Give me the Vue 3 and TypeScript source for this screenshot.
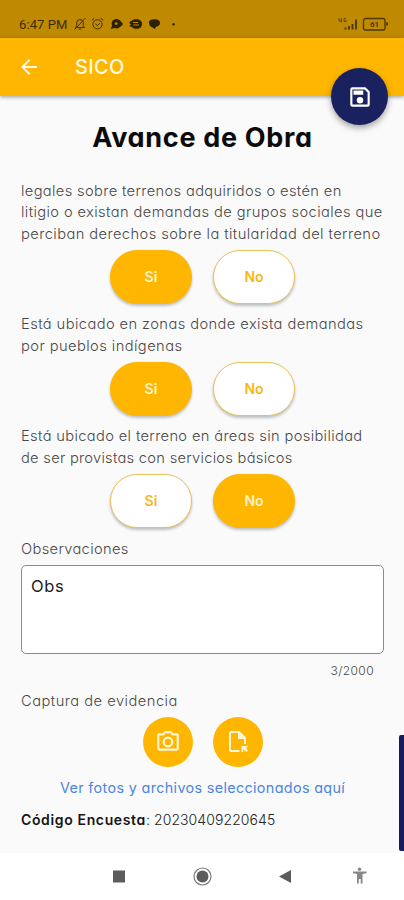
<script setup lang="ts">
import { ref } from 'vue'

type Answer = 'Si' | 'No'
interface Line { text: string; spacing: number }
interface Question { id: number; lines: Line[]; answer: Answer }

const options: Answer[] = ['Si', 'No']
const questions = ref<Question[]>([
  {
    id: 1,
    lines: [
      { text: 'legales sobre terrenos adquiridos o estén en', spacing: 0.35 },
      { text: 'litigio o existan demandas de grupos sociales que', spacing: 0.39 },
      { text: 'perciban derechos sobre la titularidad del terreno', spacing: 0.42 },
    ],
    answer: 'Si',
  },
  {
    id: 2,
    lines: [
      { text: 'Está ubicado en zonas donde exista demandas', spacing: 0.41 },
      { text: 'por pueblos indígenas', spacing: 0.43 },
    ],
    answer: 'Si',
  },
  {
    id: 3,
    lines: [
      { text: 'Está ubicado el terreno en áreas sin posibilidad', spacing: 0.35 },
      { text: 'de ser provistas con servicios básicos', spacing: 0.27 },
    ],
    answer: 'No',
  },
])
const notes = ref('Obs')
</script>

<template>
  <div class="screen">
    <div class="status">
      <span class="time">6:47 PM</span>
      <svg class="notices" width="104" height="16" viewBox="0 0 104 16" fill="none" stroke="#3d2d08" stroke-width="1">
        <path d="M2.500 11.500h9l-1.300-2V6.300a3.300 3.300 0 0 0-6.500 0v3.200zM5.800 13.200h2.400M1.500 13.500 12.500 2" />
        <circle cx="24.500" cy="8.300" r="4.600" />
        <path d="m18.800 4.200 2.500-2M30.200 4.200l-2.500-2M22.500 8l1.800 1.600 2.700-2.500" />
        <g fill="#2b2108" stroke="none">
          <path d="M43.500 3a4.700 4.700 0 1 1-1.500 9.100L37.500 13l1.600-3.200A4.700 4.700 0 0 1 43.500 3zM47 5l2.500 2v2L47 11z" />
          <circle cx="43.200" cy="7.600" r="1.400" fill="#bf8a00" />
          <path d="M56 6.500c2-1 3-2.800 6-3.200 4-.5 7 1.500 7 4.500s-2 5-5.500 5c-2.300 0-3.500-.6-4.500-1.800L56 10l2-1.300z" />
          <path d="M60 6.500h5M60.500 9h5.500" stroke="#bf8a00" />
          <path d="M76 6.500C76 4.300 78 3.300 81.500 3.300s5.500 1.200 5.500 3.500-1.500 3.700-4 3.900L82 13l-2.500-1.500C77 10.500 76 9 76 6.500z" />
          <circle cx="100.500" cy="8.300" r="1.200" />
        </g>
      </svg>
      <span class="grow"></span>
      <svg width="54" height="16" viewBox="0 0 54 16" fill="none" stroke="#4d380a">
        <path d="M3 2v3h3M5.500 2v4.500M10 2.500H8v3h2V4" stroke-width=".8" />
        <path d="M9.500 13.500v-2M13 13.500V10M16.500 13.500V8M20 13.500V3.500" stroke-width="1.900" />
        <rect x="27.500" y="2.500" width="21.500" height="11.500" rx="2" stroke-width="1.300" />
        <path d="M51 6.500v3" stroke-width="1.800" />
        <text x="38.500" y="11" text-anchor="middle" class="battery">61</text>
      </svg>
    </div>

    <header class="bar">
      <svg width="24" height="24" viewBox="0 0 24 24" fill="#fff8e2"><path d="M20 11H7.830l5.590-5.590L12 4l-8 8 8 8 1.410-1.410L7.830 13H20v-2z" /></svg>
      <span class="app-name">SICO</span>
      <button class="save" aria-label="Guardar">
        <svg width="26" height="26" viewBox="0 0 24 24" fill="#fff"><path d="M17 3H5a2 2 0 0 0-2 2v14a2 2 0 0 0 2 2h14a2 2 0 0 0 2-2V7l-4-4zm2 16H5V5h11.170L19 7.830V19zm-7-7a3 3 0 1 0 0 6 3 3 0 0 0 0-6zM6 6h9v4H6V6z" /></svg>
      </button>
    </header>

    <main class="content">
      <h1>Avance de Obra</h1>

      <section v-for="q in questions" :key="q.id" class="question">
        <p v-for="line in q.lines" :key="line.text" class="line"><span :style="{ letterSpacing: line.spacing + 'px' }">{{ line.text }}</span></p>
        <div class="choices">
          <button v-for="o in options" :key="o" class="choice" :class="{ chosen: q.answer === o }" @click="q.answer = o">{{ o }}</button>
        </div>
      </section>

      <p class="line label-notes">Observaciones</p>
      <textarea v-model="notes" class="notes" maxlength="2000"></textarea>
      <p class="counter">{{ notes.length }}/2000</p>

      <p class="line label-evidence">Captura de evidencia</p>
      <div class="captures">
        <button class="round" aria-label="Tomar foto">
          <svg width="26" height="26" viewBox="0 0 24 24" fill="#fff6d8"><path d="M20 4h-3.170L15 2H9L7.170 4H4a2 2 0 0 0-2 2v12a2 2 0 0 0 2 2h16a2 2 0 0 0 2-2V6a2 2 0 0 0-2-2zm0 14H4V6h4.050l1.830-2h4.240l1.830 2H20v12zM12 7a5 5 0 1 0 0 10 5 5 0 0 0 0-10zm0 8a3 3 0 1 1 0-6 3 3 0 0 1 0 6z" /></svg>
        </button>
        <button class="round" aria-label="Elegir archivo">
          <svg width="26" height="26" viewBox="0 0 26 26" fill="none" stroke="#fff6d8" stroke-width="2">
            <path d="M14.500 22H6.500A1.500 1.500 0 0 1 5 20.500v-16A1.500 1.500 0 0 1 6.500 3H14l6 6v6" />
            <path d="M13 3v7h7z" fill="#fff6d8" stroke="none" />
            <path d="M16.500 17h6v1.600h-2l2.500 3-1.500 1.500-3.200-2.800V23h-1.800z" fill="#fff6d8" stroke="none" />
          </svg>
        </button>
      </div>
      <a class="link">Ver fotos y archivos seleccionados aquí</a>
      <p class="code"><b>Código Encuesta</b><span>: 20230409220645</span></p>
      <div class="scrollbar"></div>
    </main>

    <nav class="nav">
      <svg width="404" height="47" viewBox="0 0 404 47" fill="#5c5c5c">
        <rect x="113" y="17.500" width="12" height="12" />
        <circle cx="202.500" cy="23.500" r="6" />
        <circle cx="202.500" cy="23.500" r="8.500" fill="none" stroke="#777" stroke-width="1.200" />
        <path d="M291 17v13l-12-6.500z" />
        <g fill="#888">
          <circle cx="359.500" cy="16.300" r="1.700" />
          <path d="M353 18.500h13.500v1.800l-4 .7v9.500h-1.800V26h-1.900v4.500H357V21l-4-.7z" />
        </g>
      </svg>
    </nav>
  </div>
</template>

<style>
body { background: #fafafa; }
</style>

<style scoped>
* { box-sizing: border-box; }
.screen {
  width: 404px; height: 900px; display: flex; flex-direction: column; overflow: hidden;
  background: #fafafa; color: #484848;
  font-family: Inter, "Open Sans", sans-serif; font-feature-settings: "cv11", "ss03";
}
button { font: inherit; font-feature-settings: inherit; padding: 0; border: 0; cursor: pointer; }
p, h1 { margin: 0; white-space: nowrap; }
.status { height: 38px; flex: none; background: #bf8a00; display: flex; align-items: flex-start; padding: 16px 14px 0 19px; }
.time { font: 400 13px/17px Roboto, sans-serif; color: #3d2c08; letter-spacing: .1px; width: 54px; white-space: nowrap; }
.grow { flex: 1; }
.battery { font: 700 8px Roboto, sans-serif; fill: #4d380a; stroke: none; }
.bar {
  height: 58px; flex: none; background: #ffb600; display: flex; align-items: center; padding-left: 17px;
  position: relative; z-index: 1; box-shadow: 0 1px 4px rgba(0, 0, 0, .38);
}
.app-name { margin-left: 34px; font-size: 20px; font-weight: 500; letter-spacing: .3px; color: #fff8e2; }
.save {
  position: absolute; right: 16px; top: 30px; width: 57px; height: 57px; border-radius: 50%;
  background: #19215f; display: grid; place-items: center; box-shadow: 0 3px 6px rgba(0, 0, 0, .35);
}
.content { flex: 1; position: relative; padding: 22px 20px 0 21px; }
h1 { height: 40px; line-height: 40px; margin-bottom: 21.600px; text-align: center; font-size: 27px; font-weight: 700; letter-spacing: .7px; color: #0b0b0b; }
.question { margin-bottom: 9.700px; }
.line { height: 21.500px; line-height: 23px; font-size: 14.700px; font-weight: 300; }
.choices { display: flex; gap: 21px; padding: 5.500px 0 0 89px; }
.choice {
  width: 82px; height: 54px; border-radius: 27px; background: #fff; color: #f6b71c; border: 1.500px solid #eac058;
  font-size: 14px; font-weight: 600; box-shadow: 0 2px 3px rgba(0, 0, 0, .24);
}
.choice.chosen { background: #ffb600; border-color: #ffb600; color: #fff3c9; }
.label-notes { letter-spacing: .33px; }
.label-evidence { letter-spacing: .48px; }
.notes {
  display: block; width: 363px; height: 89px; margin-top: 5.800px; resize: none; outline: none;
  border: 1px solid #8c8c8c; border-radius: 5px; background: #fff; padding: 8px 9px; color: #222;
  font: 400 16.500px/24px Inter, sans-serif; font-feature-settings: "cv11"; letter-spacing: .6px;
}
.counter { height: 20px; line-height: 20px; margin: 7px 10px 9px 0; text-align: right; font-size: 12px; font-weight: 300; letter-spacing: .4px; }
.captures { display: flex; gap: 20px; padding: 6px 0 0 121.500px; }
.round { width: 50px; height: 50px; border-radius: 50%; background: #ffb600; display: grid; place-items: center; }
.link { display: block; margin-top: 9.500px; height: 21px; line-height: 21px; padding-left: 39px; font-size: 14.400px; letter-spacing: .33px; color: #4a86e0; white-space: nowrap; }
.code { margin-top: 11px; height: 21px; line-height: 21px; font-size: 14px; font-weight: 300; letter-spacing: .08px; color: #222; }
.code b { font-weight: 600; letter-spacing: .64px; color: #151515; }
.scrollbar { position: absolute; right: 0; top: 639px; width: 5px; height: 116px; background: #161b5e; border-radius: 2px 0 0 2px; }
.nav { height: 47px; flex: none; background: #fff; }
.nav svg { display: block; }
</style>
